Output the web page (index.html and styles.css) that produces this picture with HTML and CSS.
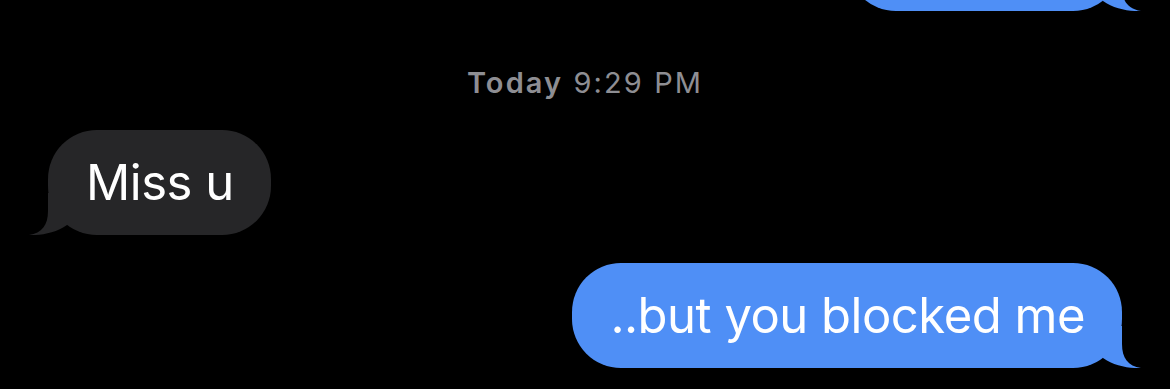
FILE: index.html
```html
<!DOCTYPE html>
<html lang="en">
<head>
<meta charset="utf-8">
<title>Messages</title>
<link rel="stylesheet" href="styles.css">
</head>
<body>
<main class="thread">
  <div class="bubble sent top" aria-hidden="true">
    <svg class="tail" viewBox="0 0 42 42" aria-hidden="true"><path d="M3 0 H22 V18 C22 32 28 40 41 42 C30 42.6 14 40 3 32 Z"/></svg>
  </div>
  <div class="stamp"><span class="day">Today</span> 9:29 PM</div>
  <div class="bubble received">Miss u
    <svg class="tail" viewBox="0 0 42 42" aria-hidden="true"><path d="M3 0 H22 V18 C22 32 28 40 41 42 C30 42.6 14 40 3 32 Z"/></svg>
  </div>
  <div class="bubble sent">..but you blocked me
    <svg class="tail" viewBox="0 0 42 42" aria-hidden="true"><path d="M3 0 H22 V18 C22 32 28 40 41 42 C30 42.6 14 40 3 32 Z"/></svg>
  </div>
</main>
</body>
</html>
```

FILE: styles.css
```css
html, body {
  margin: 0;
  padding: 0;
  background: #000;
}

body {
  width: 1170px;
  height: 389px;
  overflow: hidden;
  font-family: Inter, "Noto Sans", sans-serif;
}

.thread {
  display: flex;
  flex-direction: column;
}

.bubble {
  position: relative;
  height: 105px;
  line-height: 105px;
  font-size: 49px;
  letter-spacing: -0.5px;
  padding: 0 37px 0 38px;
  border-radius: 49px;
  color: #fff;
  white-space: nowrap;
}

.sent {
  align-self: flex-end;
  margin-right: 48px;
  background: #4f8ff6;
  fill: #4f8ff6;
}

.sent.top {
  width: 200px;
  margin-top: -94px;
}

.received {
  align-self: flex-start;
  margin-left: 48px;
  margin-top: 30px;
  background: #262628;
  fill: #262628;
}

.sent:last-child {
  margin-top: 28px;
}

.tail {
  position: absolute;
  bottom: 0;
  width: 42px;
  height: 42px;
}

.sent .tail {
  right: -20px;
}

.received .tail {
  left: -20px;
  transform: scaleX(-1);
}

.stamp {
  margin-top: 55px;
  height: 34px;
  line-height: 34px;
  text-align: center;
  font-size: 29px;
  letter-spacing: 2.1px;
  color: #8e8e93;
}

.day {
  font-weight: 600;
}
```
